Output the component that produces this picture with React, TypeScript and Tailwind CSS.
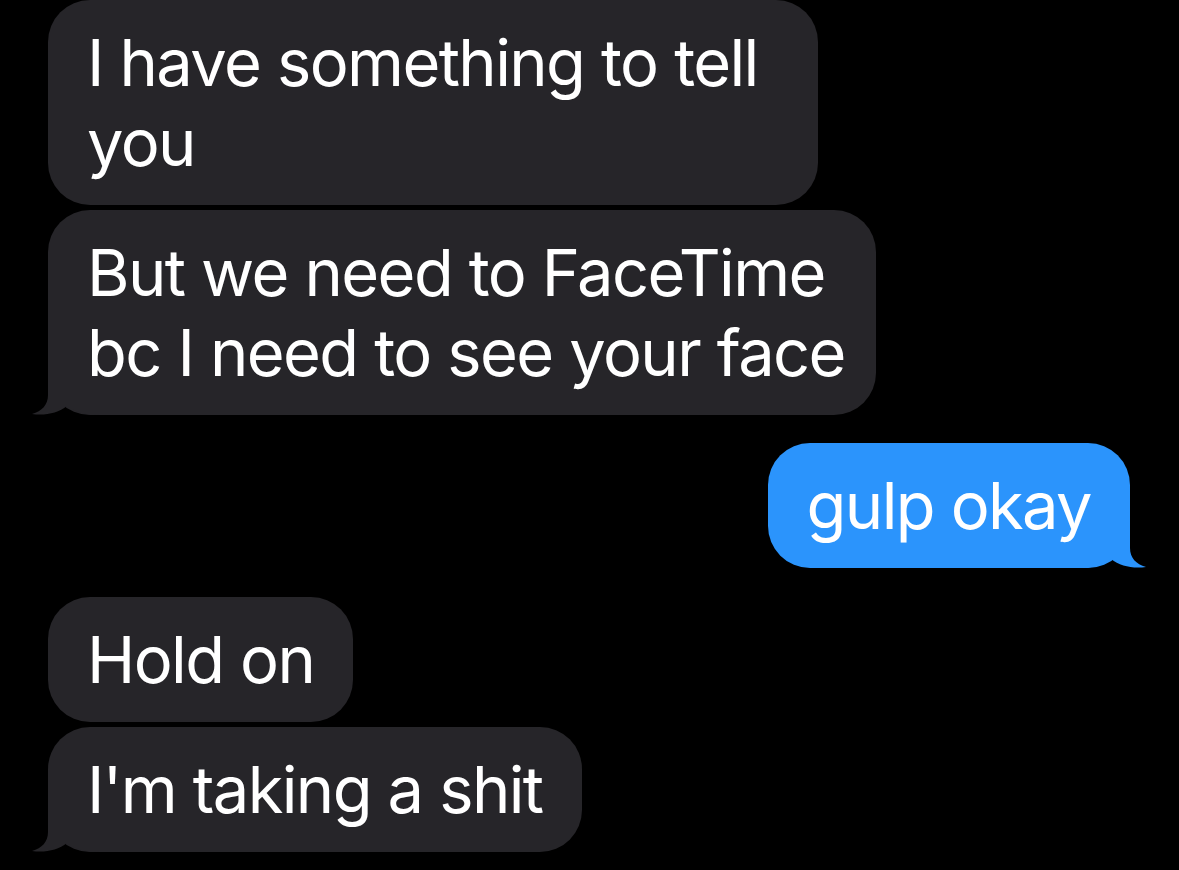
import React from "react";

function Tail(props: {color: string, side: "left" | "right"}) {
    const pos = props.side === "left" ? "left-[-18px]" : "right-[-18px] -scale-x-100";
    return <svg className={"absolute bottom-0 " + pos} width="70" height="45" viewBox="0 0 70 45">
        <path d="M18,0 L18,25 C18,35 12,41 2,44 C15,46 28,43 37,36 C45,42 55,45 70,45 L70,0 Z" fill={props.color} />
    </svg>;
}

function Bubble(props: {children: React.ReactNode, me?: boolean, tail?: boolean, width?: string, mt?: string}) {
    const color = props.me ? "#2b94fc" : "#262529";
    const bg = props.me ? "bg-[#2b94fc] self-end mr-[49px]" : "bg-[#262529] self-start";
    return <div className={"relative rounded-[42px] px-[39px] pt-[23px] pb-[22px] text-white " + bg + " " + (props.width ?? "w-fit") + " " + (props.mt ?? "mt-[5px]")}>
        {props.tail && <Tail color={color} side={props.me ? "right" : "left"} />}
        <div className="relative whitespace-nowrap">{props.children}</div>
    </div>;
}

export default function App() {
    return <div className="w-[1179px] h-[870px] bg-black overflow-hidden pl-[48px] flex flex-col"
                style={{fontFamily: "Inter, 'Liberation Sans', sans-serif"}}>
        <div className="flex flex-col text-[65px] leading-[80px] tracking-[-1.6px]">
            <Bubble width="w-[770px]" mt="mt-0">I have something to tell<br />you</Bubble>
            <Bubble width="w-[828px]" tail>But we need to FaceTime<br />bc I need to see your face</Bubble>
            <Bubble me tail mt="mt-[28px]">gulp okay</Bubble>
            <Bubble mt="mt-[29px]">Hold on</Bubble>
            <Bubble tail>I'm taking a shit</Bubble>
        </div>
    </div>;
}
